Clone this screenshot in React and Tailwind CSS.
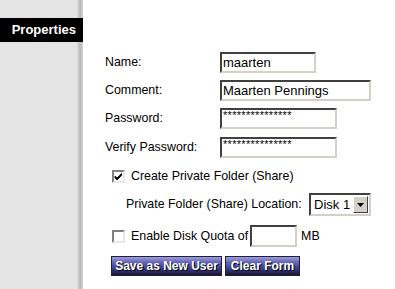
import React from 'react';

const inset = "border-2 border-t-[#404040] border-l-[#404040] border-r-[#d4d0c8] border-b-[#d4d0c8] bg-white";

const TextBox = ({ value, width, stars }) => (
  <div className={`${inset} h-[21px] ${width} flex items-center overflow-hidden`}>
    {stars ? (
      <span className="pl-[1px] text-[11px] leading-none -mt-[6px] tracking-[0.3px]">***************</span>
    ) : (
      <span className="pl-[1px] text-[13px] leading-none">{value}</span>
    )}
  </div>
);

const Check = ({ checked }) => (
  <div className="w-[13px] h-[13px] border-2 border-t-[#808080] border-l-[#808080] border-r-[#e8e8e8] border-b-[#e8e8e8] bg-white flex items-center justify-center">
    {checked && (
      <svg width="9" height="9" viewBox="0 0 9 9">
        <path d="M1 4 L3 6 L7.5 1.5 L7.5 3.5 L3 8 L1 6 Z" fill="#000" stroke="#000" strokeWidth="0.8" />
      </svg>
    )}
  </div>
);

const Button = ({ children, width }) => (
  <button className={`${width} h-[20px] border border-[#202030] bg-[linear-gradient(to_bottom,#9c9ce0_0%,#6464b4_30%,#3c3c84_65%,#161630_100%)] text-white font-bold text-[12px] leading-none [text-shadow:1px_1px_0_#000] flex items-center justify-center`}>
    {children}
  </button>
);

const Row = ({ label, children, className = "" }) => (
  <div className={`flex items-center ${className}`}>
    <div className="w-[115px]">{label}</div>
    {children}
  </div>
);

export default function App() {
  return (
    <div className="w-[395px] h-[289px] bg-white flex overflow-hidden text-black" style={{ fontFamily: '"Liberation Sans", Arial, sans-serif' }}>
      <div className="w-[83px] h-full shrink-0 bg-[linear-gradient(to_right,#e4e4e4_0px,#e4e4e4_77px,#d0d0d0_78px,#b8b8b8_80px,#c8c8c8_82px,#e0e0e0_83px)]">
        <div className="mt-[18px] h-[24px] bg-black text-white font-bold text-[13px] flex items-center justify-end pr-[7px]">
          Properties
        </div>
      </div>

      <div className="pl-[22px] pt-[52px] text-[12.4px]">
        <Row label="Name:">
          <TextBox value="maarten" width="w-[96px]" />
        </Row>
        <Row label="Comment:" className="mt-[7px]">
          <TextBox value="Maarten Pennings" width="w-[151px]" />
        </Row>
        <Row label="Password:" className="mt-[7px]">
          <TextBox stars width="w-[117px]" />
        </Row>
        <Row label="Verify Password:" className="mt-[8px]">
          <TextBox stars width="w-[117px]" />
        </Row>

        <div className="flex items-center mt-[12px] ml-[7px] h-[13px]">
          <Check checked />
          <span className="ml-[6px]">Create Private Folder (Share)</span>
        </div>

        <div className="flex items-center mt-[10px] ml-[21px] h-[23px]">
          <span className="w-[183px]">Private Folder (Share) Location:</span>
          <div className={`${inset} h-[23px] w-[62px] flex items-center justify-between pl-[3px] pr-[1px]`}>
            <span className="text-[13px] leading-none">Disk 1</span>
            <div className="w-[15px] h-[17px] bg-[#d4d0c8] border border-t-white border-l-white border-r-[#404040] border-b-[#404040] flex items-center justify-center">
              <svg width="7" height="4" viewBox="0 0 7 4"><path d="M0 0 H7 L3.5 4 Z" fill="#000" /></svg>
            </div>
          </div>
        </div>

        <div className="flex items-center mt-[9px] ml-[7px] h-[22px]">
          <Check />
          <span className="ml-[6px]">Enable Disk Quota of</span>
          <div className={`${inset} h-[22px] w-[47px] ml-[2px]`} />
          <span className="ml-[4px]">MB</span>
        </div>

        <div className="flex mt-[9px] ml-[6px] gap-[3px]">
          <Button width="w-[111px]">Save as New User</Button>
          <Button width="w-[75px]">Clear Form</Button>
        </div>
      </div>
    </div>
  );
}
